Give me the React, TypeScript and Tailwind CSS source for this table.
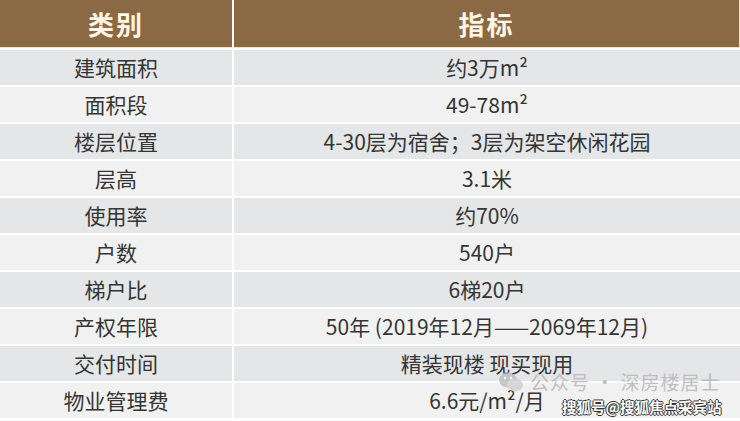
const rows: [string, string][] = [
  ["建筑面积", "约3万m²"],
  ["面积段", "49-78m²"],
  ["楼层位置", "4-30层为宿舍；3层为架空休闲花园"],
  ["层高", "3.1米"],
  ["使用率", "约70%"],
  ["户数", "540户"],
  ["梯户比", "6梯20户"],
  ["产权年限", "50年 (2019年12月——2069年12月)"],
  ["交付时间", "精装现楼 现买现用"],
  ["物业管理费", "6.6元/m²/月"],
];

export default function App() {
  return (
    <div
      className="relative w-[740px] h-[421px] bg-white overflow-hidden"
      style={{ fontFamily: '"Noto Sans CJK SC", "Noto Sans", sans-serif' }}
    >
      <div className="grid grid-cols-[232px_506px] gap-x-[2px] gap-y-[2px]">
        <div className="h-[48px] bg-[#8b6945] flex items-center justify-center text-[26px] font-bold text-[#fff6e6] tracking-[2px] border-b border-[#f3e3c4]">
          类别
        </div>
        <div className="h-[48px] bg-[#8b6945] flex items-center justify-center text-[26px] font-bold text-[#fff6e6] tracking-[2px] border-b border-r border-[#f3e3c4]">
          指标
        </div>
        {rows.map(([k, v], i) => {
          const bg = i % 2 === 0 ? "bg-[#e4e6e8]" : "bg-[#f1f1f1]";
          return [
            <div key={k + "a"} className={`h-[35px] ${bg} flex items-center justify-center text-[21px] text-[#353535]`}>
              {k}
            </div>,
            <div key={k + "b"} className={`h-[35px] ${bg} flex items-center justify-center text-[21px] text-[#353535]`}>
              {v}
            </div>,
          ];
        })}
      </div>

      {/* watermarks */}
      <div className="absolute left-[498px] top-[370px] flex items-center gap-[6px] text-[19px] leading-[24px] text-[#b4b4b4] opacity-80">
        <svg width="26" height="22" viewBox="0 0 26 22">
          <ellipse cx="10" cy="9" rx="9" ry="7.5" fill="#bdbdbd" />
          <ellipse cx="17" cy="14" rx="8" ry="6.5" fill="#cfcfcf" />
          <circle cx="7" cy="7" r="1.2" fill="#fff" />
          <circle cx="13" cy="7" r="1.2" fill="#fff" />
        </svg>
        <span className="tracking-[1px]">公众号 · 深房楼居士</span>
      </div>
      <div
        className="absolute left-[562px] top-[398px] text-[14.5px] leading-[18px] font-bold text-white"
        style={{ textShadow: "1px 0 0 #333, -1px 0 0 #333, 0 1px 0 #333, 0 -1px 0 #333" }}
      >
        搜狐号@搜狐焦点采宾站
      </div>
    </div>
  );
}
